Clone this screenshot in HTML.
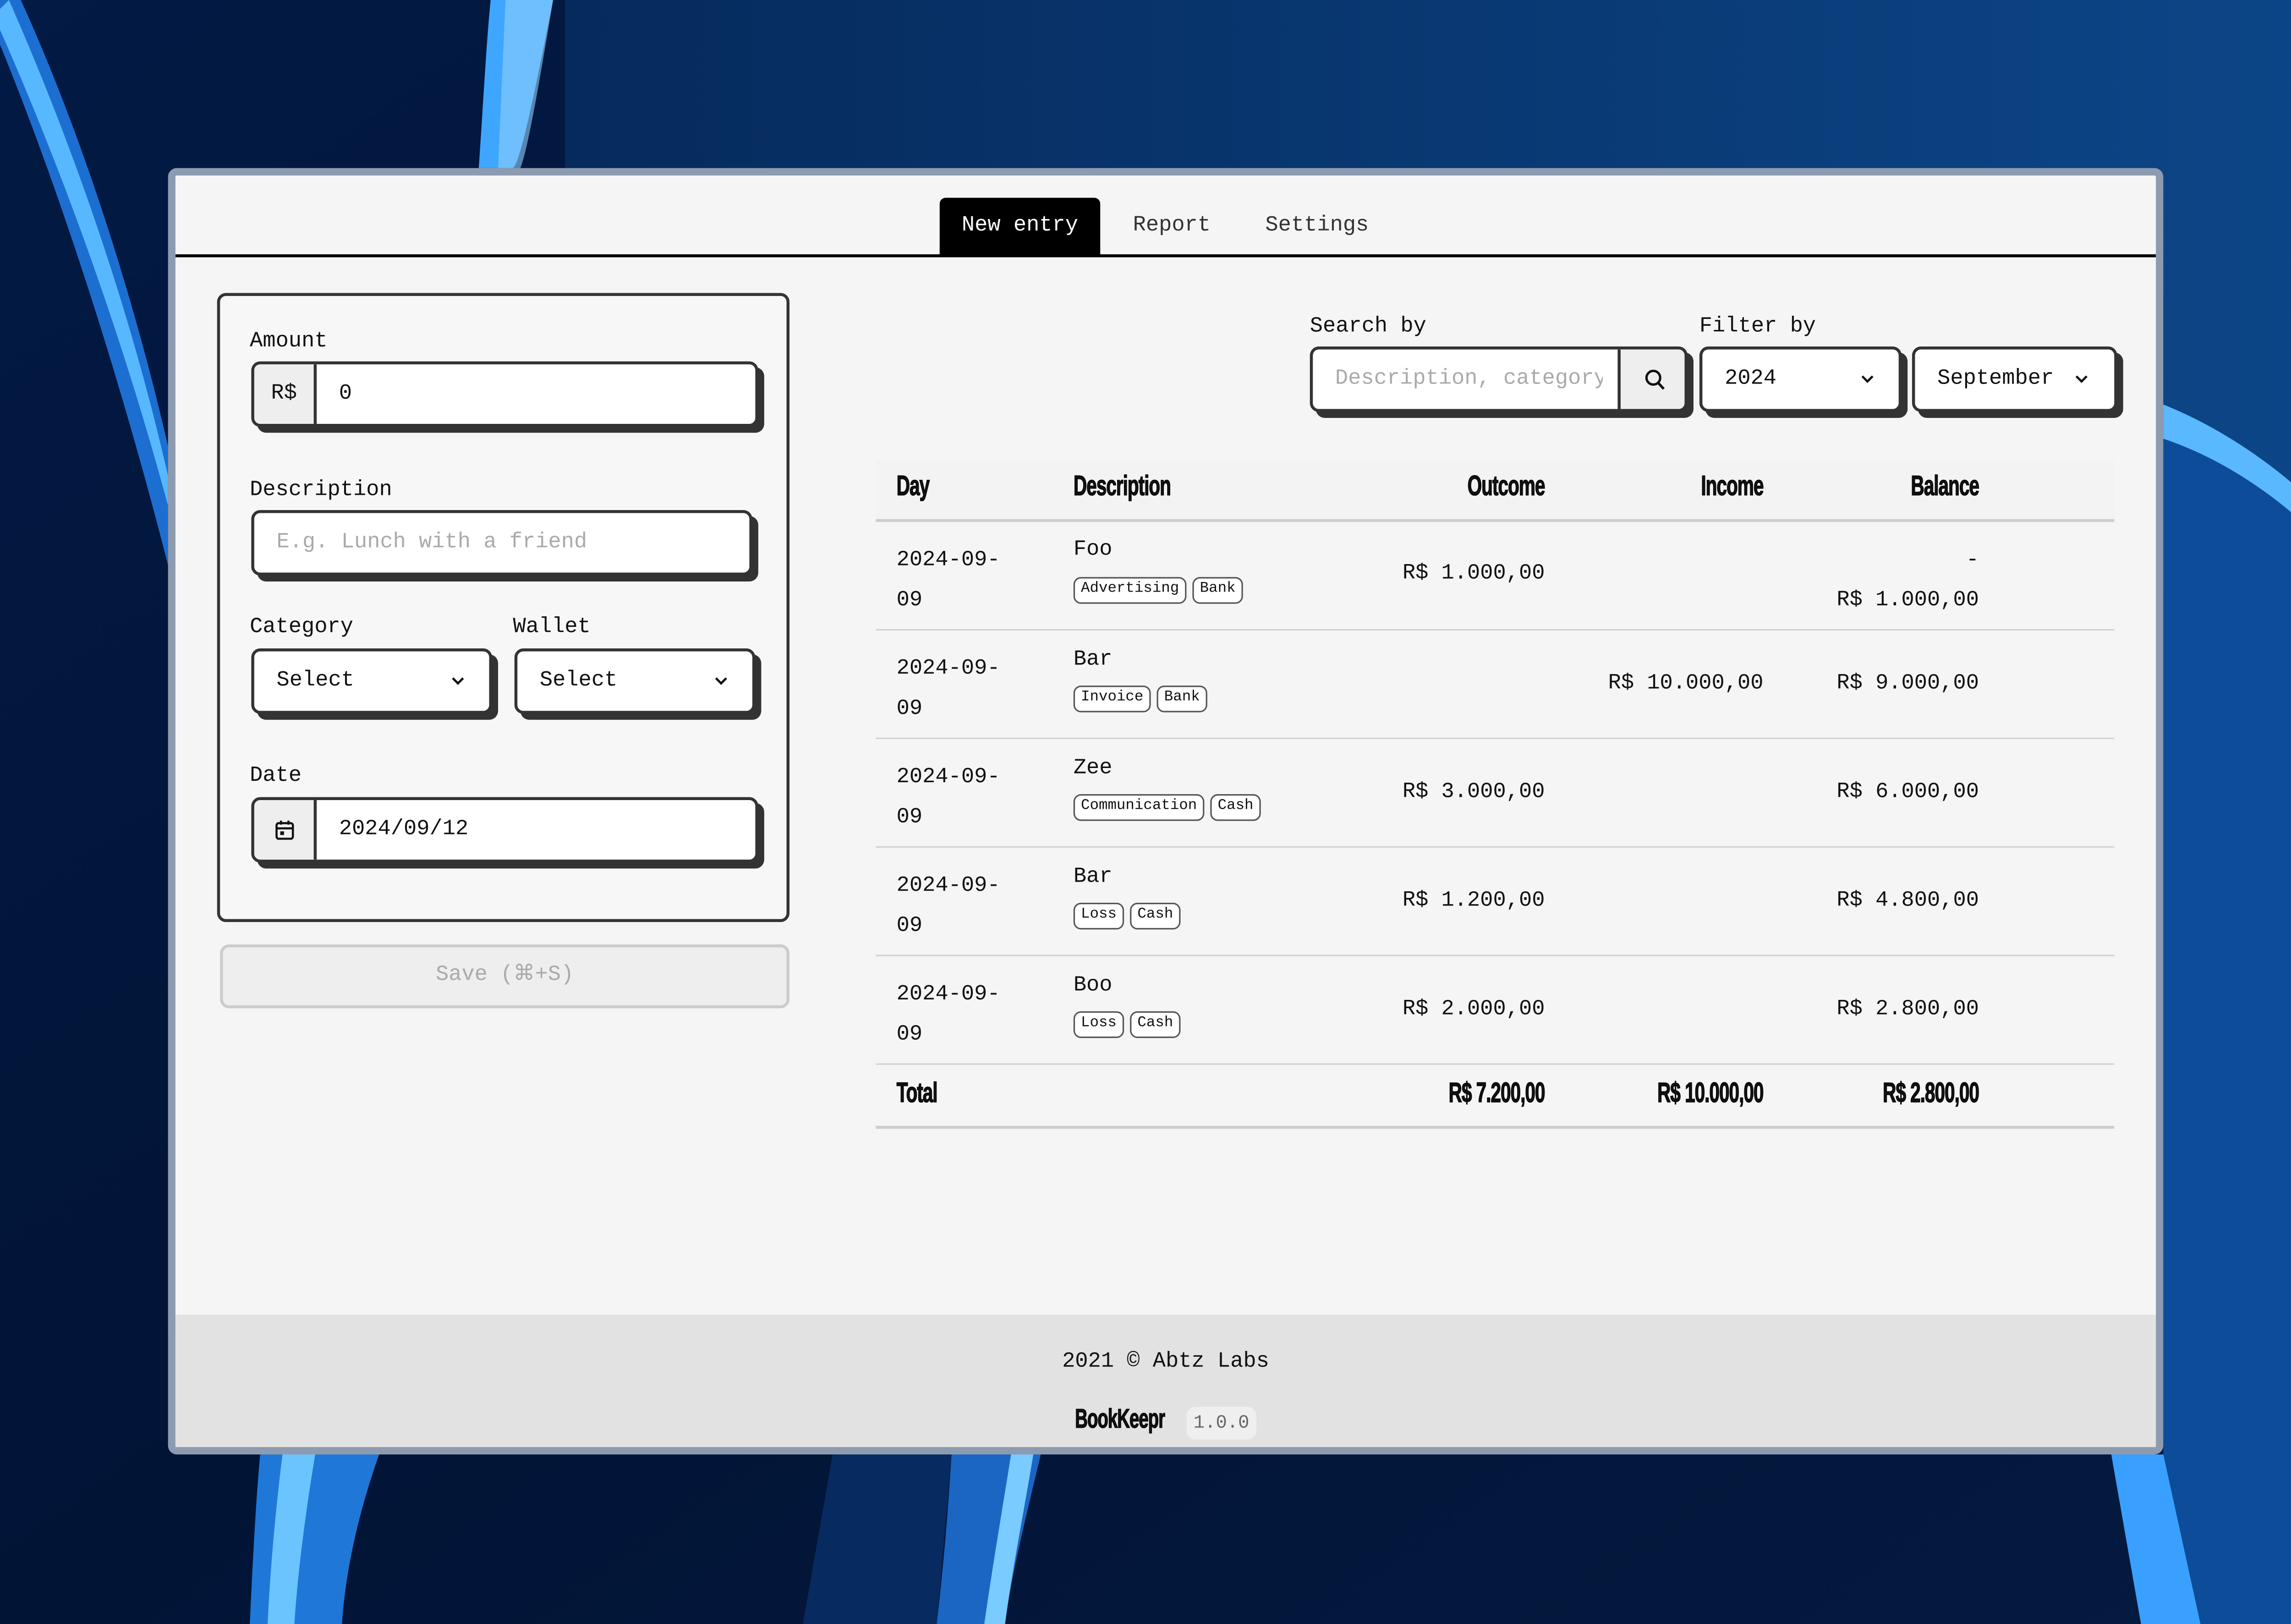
<!DOCTYPE html>
<html><head><meta charset="utf-8">
<style>
html,body{margin:0;padding:0;}
body{width:5088px;height:3544px;overflow:hidden;background:#03163a;}
#s{position:absolute;left:0;top:0;width:1568px;height:1092px;transform:scale(3.2449,3.2454);transform-origin:0 0;font-family:"Liberation Mono",monospace;color:#111;}
.abs{position:absolute;}
.win{left:113px;top:113px;width:1332px;height:855px;border:5px solid #8d9bb0;border-radius:6px;background:#f5f5f5;overflow:hidden;}
.fs{font-size:14.5px;}
.lbl{position:absolute;font-size:14.5px;color:#111;}
.inp{position:absolute;background:#fff;border:2px solid #333;border-radius:6px;box-shadow:4px 4px 0 #333;box-sizing:border-box;font-size:14.5px;display:flex;align-items:center;overflow:hidden;}
.pre{background:#eee;border-right:2px solid #333;height:100%;display:flex;align-items:center;justify-content:center;}
.cond{font-family:"Liberation Sans",sans-serif;font-weight:bold;font-size:19px;letter-spacing:-0.5px;white-space:nowrap;transform:scaleX(0.66);transform-origin:0 50%;-webkit-text-stroke:0.5px #000;}
.cr{transform-origin:100% 50%;}
.tag{display:inline-block;border:1.3px solid #555;border-radius:5px;font-size:10px;padding:2px 4px;margin-right:4px;line-height:12px;background:#fff;}
.row{position:absolute;left:589px;width:833px;height:72px;border-bottom:1.5px solid #d2d2d2;}
.row div{position:absolute;font-size:14.5px;}
.r{text-align:right;}
</style></head><body>
<div id="s">
<svg class="abs" style="left:0;top:0" width="1568" height="1092" viewBox="0 0 1568 1092">
<defs>
<linearGradient id="bg" x1="0" y1="0" x2="1" y2="1"><stop offset="0" stop-color="#021a44"/><stop offset="0.5" stop-color="#021436"/><stop offset="1" stop-color="#041a40"/></linearGradient>
<linearGradient id="tp" x1="0" y1="0" x2="1" y2="0"><stop offset="0" stop-color="#062a5c"/><stop offset="1" stop-color="#0c4688"/></linearGradient>
</defs>
<rect width="1568" height="1092" fill="url(#bg)"/>
<path d="M380 0 L1568 0 L1568 400 L1455 400 L1455 200 L380 200Z" fill="url(#tp)"/>
<path d="M330 0 L372 0 C360 60 350 110 345 113 L322 113 C325 70 327 30 330 0Z" fill="#3fa6ff"/>
<path d="M340 0 L372 0 C362 60 355 100 350 113 L335 113Z" fill="#8fd0ff" opacity="0.6"/>
<path d="M0 0 L14 0 C55 90 90 200 113 300 L113 380 C85 270 45 140 0 30Z" fill="#1c6fd0"/>
<path d="M0 6 L6 0 C50 100 88 210 113 320 L113 340 C82 225 42 115 0 20Z" fill="#58b8ff"/>
<path d="M1455 280 C1500 300 1540 330 1568 360 L1568 1092 L1455 1092Z" fill="#0c4c98"/>
<path d="M1455 272 C1500 290 1540 320 1568 350 L1568 370 C1540 340 1500 310 1455 295Z" fill="#5ab8ff"/>
<path d="M175 978 L255 978 C240 1020 232 1060 230 1092 L168 1092 C170 1050 172 1010 175 978Z" fill="#1f78d8"/>
<path d="M190 978 L212 978 C205 1020 200 1060 198 1092 L180 1092 C182 1050 186 1010 190 978Z" fill="#6cc4ff"/>
<path d="M640 978 L700 978 C690 1020 680 1060 676 1092 L630 1092 C635 1050 638 1010 640 978Z" fill="#1a66c2"/>
<path d="M680 978 L695 978 C688 1020 680 1060 676 1092 L662 1092 C668 1050 675 1010 680 978Z" fill="#7acbff"/>
<path d="M1420 978 L1455 978 L1480 1092 L1440 1092Z" fill="#3aa0ff"/>
<path d="M560 978 L640 978 L630 1092 L540 1092Z" fill="#072a60"/>
</svg>

<div class="abs win">
  <div class="abs" style="left:0;top:53px;width:1332px;height:2px;background:#000"></div>
  <div class="abs fs" style="left:514px;top:15px;width:108px;height:39px;background:#000;color:#fff;border-radius:4px 4px 0 0;text-align:center;line-height:38px">New entry</div>
  <div class="abs fs" style="left:644px;top:15px;line-height:38px;color:#333">Report</div>
  <div class="abs fs" style="left:733px;top:15px;line-height:38px;color:#333">Settings</div>

  <div class="abs" style="left:28px;top:79px;width:385px;height:423px;border:2px solid #333;border-radius:6px;box-sizing:border-box;background:#f7f7f7"></div>
  <div class="lbl" style="left:50px;top:104px">Amount</div>
  <div class="inp" style="left:51px;top:125px;width:341px;height:44px"><div class="pre" style="width:40px">R$</div><span style="margin-left:15px">0</span></div>
  <div class="lbl" style="left:50px;top:204px">Description</div>
  <div class="inp" style="left:51px;top:225px;width:337px;height:44px"><span style="margin-left:15px;color:#aaa">E.g. Lunch with a friend</span></div>
  <div class="lbl" style="left:50px;top:296px">Category</div>
  <div class="lbl" style="left:227px;top:296px">Wallet</div>
  <div class="inp" style="left:51px;top:318px;width:162px;height:44px"><span style="margin-left:15px">Select</span><svg class="abs" style="left:132px;top:16px" width="10" height="8" viewBox="0 0 10 8"><path d="M1.5 2 L5 5.5 L8.5 2" stroke="#111" stroke-width="1.5" fill="none"/></svg></div>
  <div class="inp" style="left:228px;top:318px;width:162px;height:44px"><span style="margin-left:15px">Select</span><svg class="abs" style="left:132px;top:16px" width="10" height="8" viewBox="0 0 10 8"><path d="M1.5 2 L5 5.5 L8.5 2" stroke="#111" stroke-width="1.5" fill="none"/></svg></div>
  <div class="lbl" style="left:50px;top:396px">Date</div>
  <div class="inp" style="left:51px;top:418px;width:341px;height:44px"><div class="pre" style="width:40px"><svg width="13" height="14" viewBox="0 0 13 14"><rect x="1" y="2.5" width="11" height="10.5" rx="1.5" stroke="#111" stroke-width="1.4" fill="none"/><path d="M1 6 H12 M4 0.8 V3.5 M9 0.8 V3.5" stroke="#111" stroke-width="1.4"/><rect x="3.5" y="8" width="2.5" height="2.5" fill="#111"/></svg></div><span style="margin-left:15px">2024/09/12</span></div>
  <div class="abs fs" style="left:30px;top:517px;width:383px;height:43px;border:2px solid #ccc;border-radius:6px;box-sizing:border-box;background:#eee;color:#aaa;text-align:center;line-height:39px">Save (⌘+S)</div>

  <div class="lbl" style="left:763px;top:94px">Search by</div>
  <div class="lbl" style="left:1025px;top:94px">Filter by</div>
  <div class="inp" style="left:763px;top:115px;width:254px;height:44px"><span style="margin-left:15px;color:#aaa;white-space:nowrap;width:180px;overflow:hidden">Description, category</span><div class="pre abs" style="left:205px;top:0;width:45px;border-right:none;border-left:2px solid #333"><svg width="14" height="15" viewBox="0 0 14 15"><circle cx="6" cy="6" r="4.6" stroke="#111" stroke-width="1.6" fill="none"/><path d="M9.4 9.6 L13 13.5" stroke="#111" stroke-width="1.7"/></svg></div></div>
  <div class="inp" style="left:1025px;top:115px;width:136px;height:44px"><span style="margin-left:15px">2024</span><svg class="abs" style="left:106px;top:16px" width="10" height="8" viewBox="0 0 10 8"><path d="M1.5 2 L5 5.5 L8.5 2" stroke="#111" stroke-width="1.5" fill="none"/></svg></div>
  <div class="inp" style="left:1168px;top:115px;width:138px;height:44px"><span style="margin-left:15px">September</span><svg class="abs" style="left:107px;top:16px" width="10" height="8" viewBox="0 0 10 8"><path d="M1.5 2 L5 5.5 L8.5 2" stroke="#111" stroke-width="1.5" fill="none"/></svg></div>
</div>

<div class="abs" style="left:589px;top:309px;width:833px;height:40px;background:#f3f3f3;border-bottom:2px solid #cdcdcd"></div>
<div class="abs cond" style="left:603px;top:317px">Day</div>
<div class="abs cond" style="left:722px;top:317px">Description</div>
<div class="abs cond cr r" style="left:900px;width:139px;top:317px">Outcome</div>
<div class="abs cond cr r" style="left:1050px;width:136px;top:317px">Income</div>
<div class="abs cond cr r" style="left:1200px;width:131px;top:317px">Balance</div>

<div class="row" style="top:351px">
 <div style="left:14px;top:13px;line-height:27px">2024-09-<br>09</div>
 <div style="left:133px;top:11px">Foo</div>
 <div style="left:133px;top:36px"><span class="tag">Advertising</span><span class="tag">Bank</span></div>
 <div class="r" style="left:300px;width:150px;top:27px">R$ 1.000,00</div>
 <div class="r" style="left:592px;width:150px;top:13px;line-height:27px">-<br>R$ 1.000,00</div>
</div>
<div class="row" style="top:424px">
 <div style="left:14px;top:13px;line-height:27px">2024-09-<br>09</div>
 <div style="left:133px;top:12px">Bar</div>
 <div style="left:133px;top:36px"><span class="tag">Invoice</span><span class="tag">Bank</span></div>
 <div class="r" style="left:447px;width:150px;top:28px">R$ 10.000,00</div>
 <div class="r" style="left:592px;width:150px;top:28px">R$ 9.000,00</div>
</div>
<div class="row" style="top:497px">
 <div style="left:14px;top:13px;line-height:27px">2024-09-<br>09</div>
 <div style="left:133px;top:12px">Zee</div>
 <div style="left:133px;top:36px"><span class="tag">Communication</span><span class="tag">Cash</span></div>
 <div class="r" style="left:300px;width:150px;top:28px">R$ 3.000,00</div>
 <div class="r" style="left:592px;width:150px;top:28px">R$ 6.000,00</div>
</div>
<div class="row" style="top:570px">
 <div style="left:14px;top:13px;line-height:27px">2024-09-<br>09</div>
 <div style="left:133px;top:12px">Bar</div>
 <div style="left:133px;top:36px"><span class="tag">Loss</span><span class="tag">Cash</span></div>
 <div class="r" style="left:300px;width:150px;top:28px">R$ 1.200,00</div>
 <div class="r" style="left:592px;width:150px;top:28px">R$ 4.800,00</div>
</div>
<div class="row" style="top:643px">
 <div style="left:14px;top:13px;line-height:27px">2024-09-<br>09</div>
 <div style="left:133px;top:12px">Boo</div>
 <div style="left:133px;top:36px"><span class="tag">Loss</span><span class="tag">Cash</span></div>
 <div class="r" style="left:300px;width:150px;top:28px">R$ 2.000,00</div>
 <div class="r" style="left:592px;width:150px;top:28px">R$ 2.800,00</div>
</div>
<div class="abs" style="left:589px;top:716px;width:833px;height:41px;border-bottom:2.5px solid #cdcdcd"></div>
<div class="abs cond" style="left:603px;top:725px">Total</div>
<div class="abs cond cr r" style="left:860px;width:179px;top:725px">R$ 7.200,00</div>
<div class="abs cond cr r" style="left:1010px;width:176px;top:725px">R$ 10.000,00</div>
<div class="abs cond cr r" style="left:1160px;width:171px;top:725px">R$ 2.800,00</div>

<div class="abs" style="left:118px;top:884px;width:1332px;height:89px;background:#e2e2e2"></div>
<div class="abs fs" style="left:118px;width:1332px;top:908px;text-align:center">2021 © Abtz Labs</div>
<div class="abs cond" style="left:723px;top:944px;font-size:18px">BookKeepr</div>
<div class="abs" style="left:798px;top:946px;width:47px;height:22px;background:#efefef;border-radius:6px;font-size:12.5px;color:#666;text-align:center;line-height:22px">1.0.0</div>
</div>
</body></html>
